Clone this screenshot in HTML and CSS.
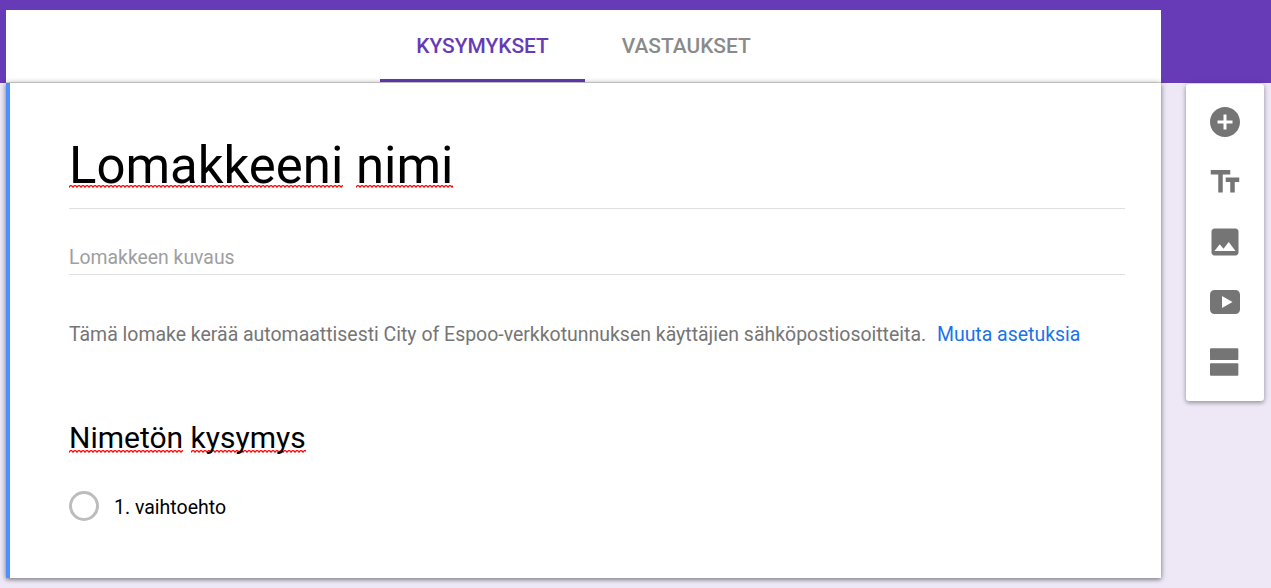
FILE: index.html
```html
<!DOCTYPE html>
<html lang="fi">
<head>
    <meta charset="UTF-8">
    <meta name="viewport" content="width=device-width, initial-scale=1.0">
    <title>Lomakkeeni nimi</title>
    <link rel="stylesheet" href="styles.css">
</head>
<body>

<header class="top-band">
    <nav class="tabs">
        <a class="tab tab-active">KYSYMYKSET</a>
        <a class="tab">VASTAUKSET</a>
    </nav>
</header>

<div class="page">
    <main class="card">
        <h1 class="form-title"><span class="spell">Lomakkeeni</span> <span class="spell">nimi</span></h1>
        <p class="form-desc">Lomakkeen kuvaus</p>
        <p class="form-note">Tämä lomake kerää automaattisesti City of Espoo-verkkotunnuksen käyttäjien sähköpostiosoitteita. <a class="note-link">Muuta asetuksia</a></p>
        <h2 class="question"><span class="spell">Nimetön</span> <span class="spell">kysymys</span></h2>
        <div class="option">
            <span class="radio"></span>
            <span class="option-label">1. vaihtoehto</span>
        </div>
    </main>

    <aside class="tools">
        <button class="tool">
            <svg class="tool-icon" viewBox="0 0 24 24"><path d="M12 2C6.48 2 2 6.48 2 12s4.48 10 10 10 10-4.48 10-10S17.52 2 12 2zm5 11h-4v4h-2v-4H7v-2h4V7h2v4h4v2z"/></svg>
        </button>
        <button class="tool">
            <svg class="tool-icon" viewBox="0 0 24 24"><path d="M2.500 4v3h5v12h3V7h5V4h-13zm19 5h-9v3h3v7h3v-7h3V9z"/></svg>
        </button>
        <button class="tool">
            <svg class="tool-icon" viewBox="0 0 24 24"><path d="M21 19V5c0-1.100-.9-2-2-2H5c-1.100 0-2 .9-2 2v14c0 1.100.9 2 2 2h14c1.100 0 2-.9 2-2zM8.500 13.500l2.500 3.010L14.500 12l4.500 6H5l3.500-4.500z"/></svg>
        </button>
        <button class="tool">
            <svg class="tool-icon" viewBox="0 0 24 24"><path d="M5 4h14c1.700 0 3 1.300 3 3v10c0 1.700-1.300 3-3 3H5c-1.700 0-3-1.300-3-3V7c0-1.700 1.300-3 3-3zm5 4v8l7-4-7-4z"/></svg>
        </button>
        <button class="tool">
            <svg class="tool-icon" viewBox="0 0 24 24"><path d="M2.600 2.900h17.700c.35 0 .6.250.6.600v6.600c0 .35-.25.600-.6.600H2.600c-.35 0-.6-.25-.6-.6V3.500c0-.35.250-.6.600-.6zm0 10h17.700c.35 0 .6.250.6.600v7c0 .35-.25.600-.6.600H2.600c-.35 0-.6-.25-.6-.6v-7c0-.35.250-.6.600-.6z"/></svg>
        </button>
    </aside>
</div>

</body>
</html>
```

FILE: styles.css
```css
* {
    box-sizing: border-box;
}
html, body {
    height: 100%;
}
body {
    margin: 0;
    background-color: #ede7f6;
    font-family: Roboto, "Liberation Sans", sans-serif;
    overflow: hidden;
}
.top-band {
    height: 83px;
    padding: 10px 110px 0 6px;
    background-color: #673ab7;
}
.tabs {
    display: flex;
    justify-content: center;
    height: 73px;
    background-color: #fff;
    border-bottom: 1px solid #e0e0e0;
}
.tab {
    height: 72px;
    padding: 0 36.500px;
    font-size: 20.900px;
    font-weight: 500;
    line-height: 72px;
    color: #8a8a8a;
}
.tab-active {
    color: #673ab7;
    border-bottom: 3px solid #673ab7;
}
.page {
    display: flex;
    align-items: flex-start;
    padding-left: 6px;
}
.card {
    width: 1155px;
    height: 495px;
    padding: 48px 36px 0 59px;
    background-color: #fff;
    border-left: 4px solid #4d90fe;
    box-shadow: 0 2px 4px rgba(0, 0, 0, 0.3), -1px 0 6px rgba(0, 0, 0, 0.15), 1px 0 6px rgba(0, 0, 0, 0.15);
}
/* spellcheck squiggle, same wave as the browser's own */
.spell {
    background-image: url("data:image/svg+xml,%3Csvg xmlns='http://www.w3.org/2000/svg' width='4' height='3'%3E%3Cpath d='M0 2.500 L1 1 L2 .5 L3 1 L4 2.500' fill='none' stroke='%23f00' stroke-width='1.300'/%3E%3C/svg%3E");
    background-repeat: repeat-x;
    background-size: 4px 3px;
}
.form-title .spell {
    background-position: left calc(100% - 7px);
}
.question .spell {
    background-position: left calc(100% - 2px);
}
.form-title {
    margin: 0;
    height: 78px;
    font-size: 50.900px;
    font-weight: 400;
    line-height: 70px;
    color: #000;
    border-bottom: 1px solid #e0e0e0;
}
.form-desc {
    margin: 0;
    height: 66px;
    padding-top: 37px;
    font-size: 19.400px;
    line-height: 24px;
    color: #9e9e9e;
    border-bottom: 1px solid #e0e0e0;
}
.form-note {
    margin: 47px 0 0;
    font-size: 19.470px;
    line-height: 26px;
    color: #757575;
}
.note-link {
    margin-left: 6px;
    color: #1a73e8;
}
.question {
    margin: 70px 0 0;
    font-size: 30px;
    font-weight: 400;
    line-height: 40px;
    color: #000;
}
.option {
    display: flex;
    gap: 15px;
    height: 30px;
    margin-top: 33px;
}
.radio {
    width: 30px;
    height: 30px;
    border: 3px solid #bdbdbd;
    border-radius: 50%;
}
.option-label {
    font-size: 19.500px;
    line-height: 34px;
    color: #000;
}
.tools {
    width: 78px;
    margin: 1px 0 0 25px;
    padding: 8px 0 9px;
    background-color: #fff;
    border-radius: 3px;
    box-shadow: 0 2px 4px rgba(0, 0, 0, 0.3), 0 0 6px rgba(0, 0, 0, 0.12);
}
.tool {
    display: flex;
    align-items: center;
    justify-content: center;
    width: 100%;
    height: 60px;
    padding: 0;
    background: none;
    border: none;
}
.tool-icon {
    width: 36px;
    height: 36px;
    fill: #757575;
}
```
